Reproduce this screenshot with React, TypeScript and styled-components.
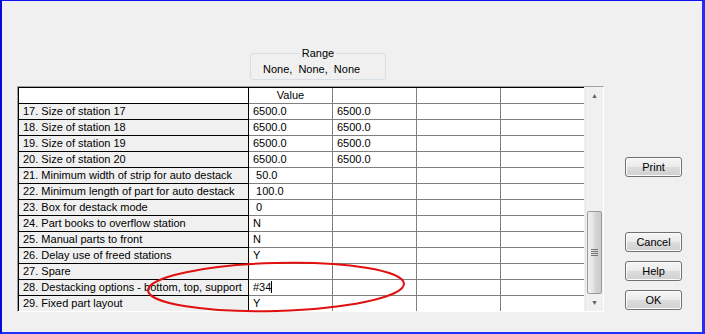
import React from 'react';
import styled, { createGlobalStyle, css } from 'styled-components';

const GlobalStyle = createGlobalStyle`
  html, body {
    margin: 0;
    padding: 0;
    background: #f0f0f0;
  }
  body {
    font-family: 'Liberation Sans', Arial, sans-serif;
    font-size: 11px;
    color: #000;
  }
`;

const Window = styled.div`
  position: relative;
  box-sizing: border-box;
  width: 705px;
  height: 334px;
  background: #f0f0f0;
  border-top: 1px solid #1010f0;
  border-left: 2px solid #0a0ad8;
  border-right: 3px solid #2a2af8;
  border-bottom: 2px solid #2030ff;
  display: flex;
`;

const MainPane = styled.div`
  padding: 47px 0 0 15px;
  display: flex;
  flex-direction: column;
`;

const GroupBox = styled.fieldset`
  box-sizing: border-box;
  width: 136px;
  height: 32px;
  margin: 0 0 6px 233px;
  padding: 0;
  border: 1px solid #d5dfe5;
  border-radius: 3px;
  line-height: 13px;
  legend {
    margin: 0 auto;
    padding: 0 2px;
    line-height: 11px;
  }
`;

const RangeValues = styled.div`
  word-spacing: 3px;
  padding-left: 12px;
  margin-top: 4px;
`;

const GridFrame = styled.div`
  box-sizing: border-box;
  width: 587px;
  height: 226px;
  border-top: 1px solid #a0a0a0;
  border-left: 1px solid #a0a0a0;
  border-right: 1px solid #fff;
  border-bottom: 1px solid #fff;
  display: flex;
`;

const Table = styled.div`
  display: grid;
  grid-template-columns: 230px repeat(4, 84px);
  grid-auto-rows: 16px;
  border-left: 1px solid #000;
  border-top: 1px solid #000;
  height: 224px;
  box-sizing: border-box;
  overflow: hidden;
`;

const Cell = styled.div<{ $kind: 'label' | 'value' | 'head' | 'headLabel' }>`
  box-sizing: border-box;
  padding-left: 4px;
  line-height: 15px;
  white-space: pre;
  overflow: hidden;
  border-bottom: 1px solid #808080;
  border-right: 1px solid #808080;
  background: #fff;
  ${(p) =>
    (p.$kind === 'label' || p.$kind === 'headLabel') &&
    css`
      background: ${p.$kind === 'label' ? '#f0f0f0' : '#fff'};
      border-bottom-color: #000;
      border-right-color: #000;
    `}
  ${(p) =>
    p.$kind === 'head' &&
    css`
      text-align: center;
      padding-left: 0;
    `}
`;

const Caret = styled.span`
  display: inline-block;
  width: 1px;
  height: 12px;
  background: #000;
  vertical-align: -2px;
`;

const ScrollBar = styled.div`
  box-sizing: border-box;
  width: 18px;
  height: 224px;
  margin-left: 1px;
  background: #f0f0f0;
  border-left: 1px solid #e6e6e6;
  display: flex;
  flex-direction: column;
`;

const ArrowButton = styled.div`
  height: 17px;
  display: flex;
  align-items: center;
  justify-content: center;
  color: #606060;
  font-size: 7px;
`;

const Track = styled.div`
  flex: 1;
  display: flex;
  flex-direction: column;
  justify-content: flex-end;
`;

const Thumb = styled.div`
  box-sizing: border-box;
  height: 83px;
  margin: 0 1px;
  border: 1px solid #9a9a9a;
  border-radius: 2px;
  background: linear-gradient(to right, #f0f0f0, #e2e2e2 45%, #d4d4d4 55%, #cbcbcb);
  display: flex;
  align-items: center;
  justify-content: center;
`;

const Grip = styled.div`
  width: 7px;
  height: 7px;
  background: repeating-linear-gradient(to bottom, #777 0 1px, transparent 1px 2px);
`;

const ButtonColumn = styled.div`
  display: flex;
  flex-direction: column;
  padding: 156px 0 0 21px;
`;

const DialogButton = styled.button<{ $gap?: number }>`
  box-sizing: border-box;
  width: 57px;
  height: 20px;
  margin-top: ${(p) => p.$gap ?? 9}px;
  padding: 0;
  font-family: 'Liberation Sans', Arial, sans-serif;
  font-size: 11px;
  color: #000;
  border: 1px solid #707070;
  border-radius: 3px;
  background: linear-gradient(to bottom, #f6f6f6 0%, #ebebeb 48%, #dddddd 52%, #cfcfcf 100%);
  box-shadow: inset 0 0 0 1px #fcfcfc;
`;

const Highlight = styled.svg`
  position: absolute;
  left: 140px;
  top: 255px;
  pointer-events: none;
`;

type Row = { label: string; v1: React.ReactNode; v2?: string };

const rows: Row[] = [
  { label: '17. Size of station 17', v1: '6500.0', v2: '6500.0' },
  { label: '18. Size of station 18', v1: '6500.0', v2: '6500.0' },
  { label: '19. Size of station 19', v1: '6500.0', v2: '6500.0' },
  { label: '20. Size of station 20', v1: '6500.0', v2: '6500.0' },
  { label: '21. Minimum width of strip for auto destack', v1: ' 50.0' },
  { label: '22. Minimum length of part for auto destack', v1: ' 100.0' },
  { label: '23. Box for destack mode', v1: ' 0' },
  { label: '24. Part books to overflow station', v1: 'N' },
  { label: '25. Manual parts to front', v1: 'N' },
  { label: '26. Delay use of freed stations', v1: 'Y' },
  { label: '27. Spare', v1: '' },
  {
    label: '28. Destacking options - bottom, top, support',
    v1: (
      <>
        #34
        <Caret />
      </>
    ),
  },
  { label: '29. Fixed part layout', v1: 'Y' },
];

export default function App() {
  return (
    <>
      <GlobalStyle />
      <Window>
        <MainPane>
          <GroupBox>
            <legend>Range</legend>
            <RangeValues>None, None, None</RangeValues>
          </GroupBox>
          <GridFrame>
            <Table>
              <Cell $kind="headLabel" />
              <Cell $kind="head">Value</Cell>
              <Cell $kind="value" />
              <Cell $kind="value" />
              <Cell $kind="value" />
              {rows.map((r) => (
                <React.Fragment key={r.label}>
                  <Cell $kind="label">{r.label}</Cell>
                  <Cell $kind="value">{r.v1}</Cell>
                  <Cell $kind="value">{r.v2 ?? ''}</Cell>
                  <Cell $kind="value" />
                  <Cell $kind="value" />
                </React.Fragment>
              ))}
            </Table>
            <ScrollBar>
              <ArrowButton>▲</ArrowButton>
              <Track>
                <Thumb>
                  <Grip />
                </Thumb>
              </Track>
              <ArrowButton>▼</ArrowButton>
            </ScrollBar>
          </GridFrame>
        </MainPane>
        <ButtonColumn>
          <DialogButton $gap={0}>Print</DialogButton>
          <DialogButton $gap={55}>Cancel</DialogButton>
          <DialogButton>Help</DialogButton>
          <DialogButton>OK</DialogButton>
        </ButtonColumn>
        <Highlight width="270" height="62" viewBox="0 0 270 62">
          <ellipse
            cx="134"
            cy="31"
            rx="128"
            ry="24"
            fill="none"
            stroke="#e01010"
            strokeWidth="2"
            transform="rotate(-1.5 134 31)"
          />
        </Highlight>
      </Window>
    </>
  );
}
